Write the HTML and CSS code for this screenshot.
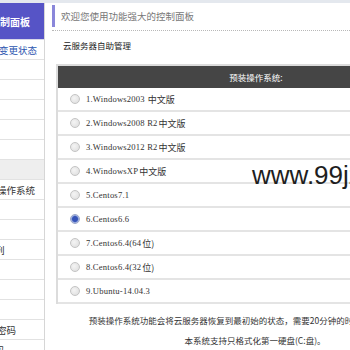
FILE: index.html
```html
<!DOCTYPE html>
<html lang="zh-CN">
<head>
<meta charset="utf-8">
<title>控制面板</title>
<link rel="stylesheet" href="styles.css">
</head>
<body>
<div class="page">
  <aside class="side">
    <div class="side-head"><span class="cut-2">控制面板</span></div>
    <ul class="side-list">
      <li class="link"><span class="cut-1">变更状态</span></li>
      <li></li>
      <li></li>
      <li></li>
      <li></li>
      <li></li>
      <li class="active"></li>
      <li><span class="cut-0">操作系统</span></li>
      <li></li>
      <li></li>
      <li><span class="cut-half">列</span></li>
      <li></li>
      <li></li>
      <li></li>
      <li><span class="cut-0">密码</span></li>
      <li><span class="cut-half">码</span></li>
    </ul>
  </aside>
  <main class="main">
    <div class="welcome"><div class="welcome-bar">欢迎您使用功能强大的控制面板</div></div>
    <div class="title">云服务器自助管理</div>
    <div class="panel-wrap">
      <div class="panel">
        <div class="thead">预装操作系统:</div>
        <ul class="os-list">
          <li><label><input type="radio" name="os"><span class="lat">1.Windows2003</span>&nbsp;中文版</label></li>
          <li><label><input type="radio" name="os"><span class="lat">2.Windows2008 R2</span>中文版</label></li>
          <li><label><input type="radio" name="os"><span class="lat">3.Windows2012 R2</span>中文版</label></li>
          <li><label><input type="radio" name="os"><span class="lat">4.WindowsXP</span>中文版</label></li>
          <li><label><input type="radio" name="os"><span class="lat">5.Centos7.1</span></label></li>
          <li><label><input type="radio" name="os" checked><span class="lat">6.Centos6.6</span></label></li>
          <li><label><input type="radio" name="os"><span class="lat">7.Centos6.4(64</span>位)</label></li>
          <li><label><input type="radio" name="os"><span class="lat">8.Centos6.4(32</span>位)</label></li>
          <li><label><input type="radio" name="os"><span class="lat">9.Ubuntu-14.04.3</span></label></li>
        </ul>
      </div>
      <p class="note">预装操作系统功能会将云服务器恢复到最初始的状态，需要20分钟的时间，请耐心等待。<br>本系统支持只格式化第一硬盘(C:盘)。</p>
    </div>
  </main>
  <span class="watermark">www.99jz.com</span>
</div>
</body>
</html>
```

FILE: styles.css
```css
html, body {
  margin: 0;
  padding: 0;
  background: #ffffff;
}
body {
  width: 350px;
  height: 350px;
  overflow: hidden;
  font-family: "Liberation Serif", "Noto Sans CJK SC", serif;
  color: #333333;
}
.page {
  position: relative;
  display: flex;
  border-top: 3px solid #e4e8ee;
  width: 350px;
  height: 347px;
  overflow: hidden;
}
.side {
  width: 44px;
  flex: none;
  border-right: 1px solid #d6d6d6;
  overflow: hidden;
  font-family: "Noto Sans CJK SC", sans-serif;
  font-size: 9.5px;
}
.side-head {
  height: 37px;
  background: #5654c6;
  color: #ffffff;
  font-weight: bold;
  font-size: 10px;
  display: flex;
  align-items: center;
  white-space: nowrap;
  border-bottom: 1px solid #d8d8e8;
  padding-top: 1px;
  box-sizing: border-box;
}
.cut-2 { margin-left: -10px; }
.cut-1 { margin-left: -1px; }
.cut-0 { margin-left: -3px; }
.cut-half { margin-left: -5px; }
.side-list {
  list-style: none;
  margin: 0;
  padding: 0;
}
.side-list li {
  height: 19px;
  border-bottom: 1px solid #e2e2e2;
  display: flex;
  align-items: center;
  white-space: nowrap;
  color: #333333;
}
.side-list li.link { color: #2c56b0; }
.side-list li.active { background: #eeeeee; }
.main {
  flex: 1;
  min-width: 0;
}
.welcome {
  margin-left: 7px;
  padding: 2px 0 3px 0;
  border-bottom: 1px dotted #b8b8b8;
}
.welcome-bar {
  height: 22px;
  border-left: 3px solid #8a87da;
  padding-left: 6px;
  display: flex;
  align-items: center;
  white-space: nowrap;
  font-family: "Noto Sans CJK SC", sans-serif;
  font-size: 9.5px;
  color: #777777;
}
.title {
  margin-top: 4px;
  padding-left: 18px;
  line-height: 20px;
  font-family: "Noto Sans CJK SC", sans-serif;
  font-size: 8.5px;
  color: #222222;
}
.panel-wrap {
  width: 398px;
  margin-left: 11px;
  margin-top: 9px;
}
.panel {
  border-top: 2px solid #dcdcdc;
  border-left: 2px solid #dcdcdc;
}
.thead {
  height: 22px;
  background: #454545;
  color: #ffffff;
  font-family: "Noto Sans CJK SC", sans-serif;
  font-size: 8.5px;
  display: flex;
  align-items: center;
  justify-content: center;
}
.os-list {
  list-style: none;
  margin: 0;
  padding: 0;
}
.os-list li {
  height: 22px;
  border-bottom: 2px solid #e4e4e4;
  display: flex;
  align-items: center;
  padding-left: 12px;
  font-family: "Noto Sans CJK SC", sans-serif;
  font-size: 9px;
  color: #333333;
  white-space: nowrap;
}
.os-list label {
  display: flex;
  align-items: center;
}
.lat {
  font-family: "Liberation Serif", serif;
  font-size: 8.6px;
  letter-spacing: 0.2px;
  margin-right: 1px;
}
.os-list input {
  appearance: none;
  -webkit-appearance: none;
  width: 10px;
  height: 10px;
  margin: 0 6px 0 0;
  border-radius: 50%;
  border: 1px solid #c4c4c4;
  background: radial-gradient(circle at 40% 40%, #f4f4f4 0%, #dcdcdc 100%);
  box-sizing: border-box;
  flex: none;
}
.os-list input:checked {
  background: radial-gradient(circle at 50% 50%, #3553b8 0 2.5px, #8fa3dc 3.5px, #e8e8ee 4.5px);
  border-color: #9aa6c8;
}
.note {
  margin: 6px 0 0 0;
  text-align: center;
  line-height: 20px;
  font-family: "Noto Sans CJK SC", sans-serif;
  font-size: 8.5px;
  color: #333333;
  white-space: nowrap;
}
.watermark {
  position: absolute;
  left: 252px;
  top: 159px;
  font-family: "Liberation Sans", sans-serif;
  font-size: 26px;
  line-height: 1;
  color: #1e1e1e;
  white-space: nowrap;
}
```
